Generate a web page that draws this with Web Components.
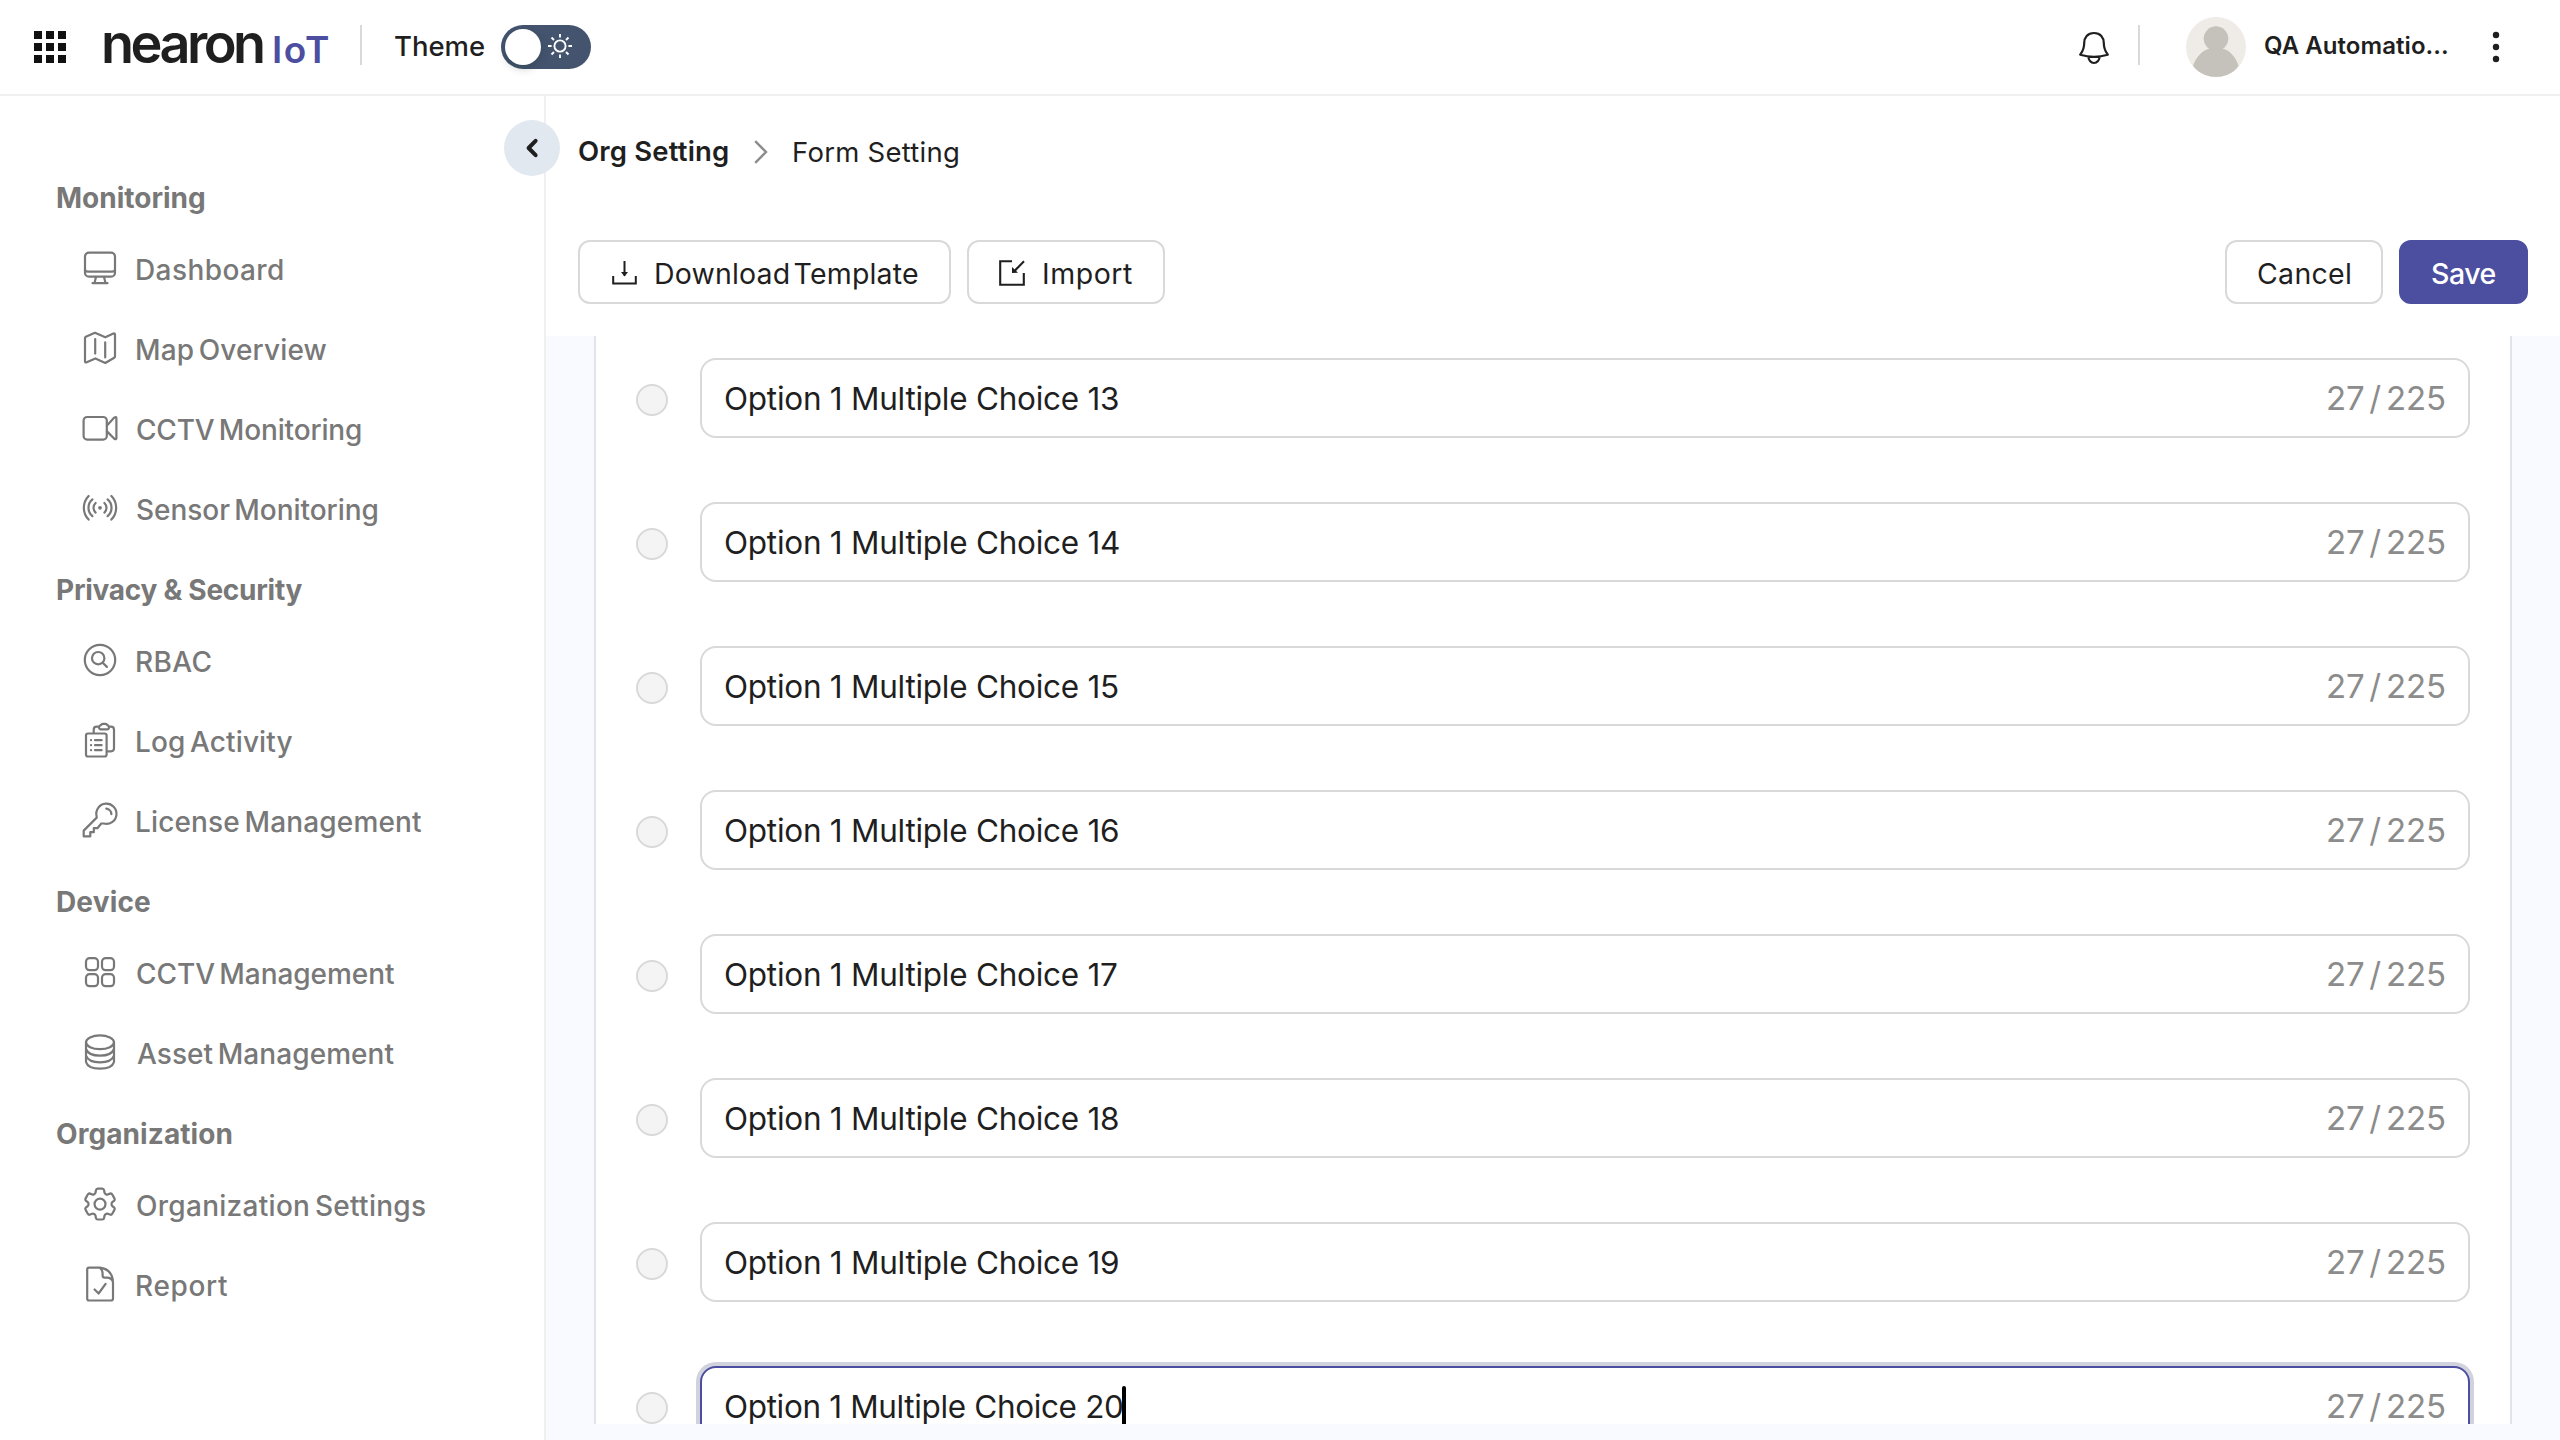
<!DOCTYPE html>
<html lang="en">
<head>
<meta charset="utf-8">
<title>Form Setting</title>
<style>
html,body{margin:0;height:100%}
body{font-family:Inter,"Liberation Sans",sans-serif;color:#1f1f1f;background:#fff;overflow:hidden}
</style>
</head>
<body>
<app-shell></app-shell>
<script>
const define = (name, html, setup) => customElements.define(name, class extends HTMLElement {
  connectedCallback() {
    if (this.shadowRoot) return;
    const root = this.attachShadow({ mode: 'open' });
    const t = document.createElement('template');
    t.innerHTML = html;
    root.appendChild(t.content.cloneNode(true));
    if (setup) setup.call(this, root);
  }
});

/* Label whose tracking is adjusted so its ink spans a given width. */
const ctx = document.createElement('canvas').getContext('2d');
define('fit-text', `<style>:host{display:block;white-space:pre;line-height:1.2;flex:none}</style><slot></slot>`, function () {
  const size = this.getAttribute('size'), weight = this.getAttribute('weight') || 400;
  const text = this.textContent, width = +this.getAttribute('width');
  const ref = this.getAttribute('ref') || text;
  const word = +(this.getAttribute('word') || 0);
  this.style.fontSize = size + 'px';
  this.style.fontWeight = weight;
  this.style.wordSpacing = word + 'px';
  ctx.font = `${weight} ${size}px Inter, "Liberation Sans", sans-serif`;
  const m = ctx.measureText(ref);
  const extra = word * (ref.split(' ').length - 1);
  const s = (width - extra - m.actualBoundingBoxLeft - m.actualBoundingBoxRight) / (ref.length - 1);
  this.style.letterSpacing = s.toFixed(3) + 'px';
  this.style.marginLeft = m.actualBoundingBoxLeft.toFixed(2) + 'px';
  this.style.marginRight = (m.actualBoundingBoxRight - m.width - s).toFixed(2) + 'px';
});

const ICONS = {
  dashboard: '<rect x="5" y="4.7" width="30" height="24" rx="4"/><path d="M5 21.500Q5 23.700 8 23.700H32Q35 23.700 35 21.500M16 29l-1.600 6.200M24 29l1.600 6.200M12.500 35.200h15"/>',
  map: '<path d="M5.800 8.700 15 4.800l10.300 4.500L33.400 5.600Q35 5 35 6.800V28.200q0 1-.8 1.500L25.300 35 15.400 30.400 6.700 34.300Q5 35 5 33.300V10Q5 9.100 5.800 8.700ZM15.200 11v14.600M25.200 14.400V29.500"/>',
  camera: '<rect x="3.600" y="9" width="23.200" height="22.600" rx="3.600"/><path d="M27 17.500 34.300 9.600q2.100-1.500 2.100.6V30q0 2-2.100.7L27 23.400"/>',
  sensor: '<path d="M8.600 8A17 17 0 0 0 8.600 31.600M12.400 11.400A11 11 0 0 0 12.400 28.200M15.600 15A6.600 6.600 0 0 0 15.600 24.600M31.400 8A17 17 0 0 1 31.400 31.600M27.600 11.400A11 11 0 0 1 27.600 28.200M24.400 15A6.600 6.600 0 0 1 24.400 24.600"/><circle cx="20" cy="19.800" r="1.900" fill="currentColor" stroke="none"/>',
  rbac: '<circle cx="20" cy="20" r="15.200"/><circle cx="18.200" cy="18.200" r="6.200"/><path d="m22.700 22.700 4.200 4.200"/>',
  log: '<rect x="6" y="13.500" width="20.600" height="23" rx="2"/><path d="M13.700 13V9.700Q13.700 6.700 16.700 6.700H19M29 6.700H31Q34 6.700 34 9.700V28.300Q34 31.300 31 31.300H27.500M19 6.500L21.300 4.600Q22 3.900 23 3.900H25.300Q26.300 3.900 27 4.600L29 6.500Q29.200 9.400 27 9.400H21Q18.800 9.400 19 6.500ZM15 20.200h6.600M15 25.200h6.600M15 30.200h6.600M11 20.200h.1M11 25.200h.1M11 30.200h.1"/>',
  key: '<path d="M16.600 16.200A10.100 10.100 0 1 1 23.700 23.500H21.300L17.400 28.200H13.800V32.200H10.300V36.300H3.700V30.600L16.700 17.600ZM26.300 8.700A5.800 5.800 0 0 1 31.400 14.200"/>',
  grid: '<rect x="6" y="6.200" width="12" height="12" rx="3.600"/><rect x="22" y="6.200" width="12" height="12" rx="3.600"/><rect x="6" y="22.200" width="12" height="12" rx="3.600"/><rect x="22" y="22.200" width="12" height="12" rx="3.600"/>',
  database: '<ellipse cx="20" cy="10.300" rx="14" ry="6.900"/><path d="M6 10.300V30Q8 36.700 20 36.700T34 30V10.300M6 17Q8.500 23.700 20 23.700T34 17M6 23.600Q8.500 30.300 20 30.300T34 23.600"/>',
  gear: '<g transform="translate(-.5 -.4) scale(1.710)" stroke-width="1.300"><path d="M9.594 3.940c.09-.542.56-.94 1.110-.94h2.593c.55 0 1.020.398 1.110.94l.213 1.281c.063.374.313.686.645.87.074.04.147.083.22.127.325.196.72.257 1.075.124l1.217-.456a1.125 1.125 0 0 1 1.370.49l1.296 2.247a1.125 1.125 0 0 1-.26 1.431l-1.003.827c-.293.241-.438.613-.43.992a7.723 7.723 0 0 1 0 .255c-.008.378.137.75.43.991l1.004.827c.424.35.534.955.26 1.430l-1.298 2.247a1.125 1.125 0 0 1-1.369.491l-1.217-.456c-.355-.133-.75-.072-1.076.124a6.470 6.470 0 0 1-.22.128c-.331.183-.581.495-.644.869l-.213 1.281c-.09.543-.56.94-1.110.94h-2.594c-.55 0-1.019-.398-1.110-.94l-.213-1.281c-.062-.374-.312-.686-.644-.87a6.520 6.520 0 0 1-.22-.127c-.325-.196-.72-.257-1.076-.124l-1.217.456a1.125 1.125 0 0 1-1.369-.49l-1.297-2.247a1.125 1.125 0 0 1 .26-1.431l1.004-.827c.292-.24.437-.613.43-.991a6.932 6.932 0 0 1 0-.255c.007-.38-.138-.751-.43-.992l-1.004-.827a1.125 1.125 0 0 1-.26-1.430l1.297-2.247a1.125 1.125 0 0 1 1.370-.491l1.216.456c.356.133.751.072 1.076-.124.072-.044.146-.086.22-.128.332-.183.582-.495.644-.869l.214-1.280Z"/><circle cx="12" cy="12" r="3.200"/></g>',
  report: '<path d="M9 3.700H20Q33 5.500 33 19V34.500Q33 36.500 31 36.500H9Q7.200 36.500 7.200 34.500V5.700Q7.200 3.700 9 3.700ZM20 3.900Q22.600 6 22.600 9.500V11.500Q22.600 13.600 24.800 13.600H27Q31.500 13.600 33 18M14.600 25.500l4 4L25.600 19.800"/>'
};
define('nav-icon', `<style>:host{display:block;width:40px;height:40px;flex:none}svg{display:block}</style>
<svg width="40" height="40" viewBox="0 0 40 40" fill="none" stroke="currentColor" stroke-width="2.200" stroke-linecap="round" stroke-linejoin="round"></svg>`,
  function (root) { root.querySelector('svg').innerHTML = ICONS[this.getAttribute('name')]; });

define('nav-item', `<style>
:host{display:flex;align-items:center;height:80px;padding-left:80px;gap:17px}
::slotted(nav-icon){margin-top:-4px}
.label{margin-top:1px}
</style><slot name="icon"></slot><div class="label"><slot></slot></div>`);

define('nav-group', `<style>
:host{display:block}
.title{height:72px;display:flex;align-items:flex-start;padding-left:57px}
.title ::slotted(*){line-height:80px!important}
</style><div class="title"><slot name="title"></slot></div><slot></slot>`);

define('collapse-button', `<style>
:host{display:flex;align-items:center;justify-content:center;width:56px;height:56px;border-radius:50%;background:#e1e8f0}
</style><svg width="56" height="56" viewBox="0 0 56 56" fill="none" stroke="#1f1f1f" stroke-width="4" stroke-linecap="round" stroke-linejoin="round"><path d="m31.600 20.800-7 7.200 7 7.200"/></svg>`);

const NAV = [
  ['Monitoring', 147, [['dashboard', 'Dashboard', 146], ['map', 'Map Overview', 189.5], ['camera', 'CCTV Monitoring', 224], ['sensor', 'Sensor Monitoring', 240.5]]],
  ['Privacy & Security', 245.5, [['rbac', 'RBAC', 74.5], ['log', 'Log Activity', 155.5], ['key', 'License Management', 284]]],
  ['Device', 93, [['grid', 'CCTV Management', 257], ['database', 'Asset Management', 256.5]]],
  ['Organization', 174.5, [['gear', 'Organization Settings', 288], ['report', 'Report', 90]]]
];
const esc = s => s.replace('&', '&amp;');
define('side-bar', `<style>
:host{display:block;position:relative;box-sizing:border-box;width:546px;border-right:2px solid #f0f0f0;padding-top:62px;color:#787878;flex:none}
collapse-button{position:absolute;right:-16px;top:24px;z-index:2}
</style><nav>${NAV.map(([t, w, items]) => `<nav-group><fit-text slot="title" size="28" weight="700" width="${w}">${esc(t)}</fit-text>${items.map(([i, n, nw]) => `<nav-item><nav-icon slot="icon" name="${i}"></nav-icon><fit-text size="28" weight="500" word="-3" width="${nw}">${n}</fit-text></nav-item>`).join('')}</nav-group>`).join('')}</nav>
<collapse-button></collapse-button>`);

define('brand-logo', `<style>
:host{display:flex;align-items:baseline;gap:11px;line-height:1}
.iot{color:#4c4fa0}
</style><fit-text size="54" weight="600" width="159">nearon</fit-text><fit-text class="iot" size="37" weight="600" width="54">IoT</fit-text>`);

define('theme-switch', `<style>
:host{display:flex;align-items:center;box-sizing:border-box;width:90px;height:44px;border-radius:22px;background:#44546f;padding:0 4px}
i{width:36px;height:36px;border-radius:50%;background:#fff;box-shadow:0 4px 8px rgba(0,35,11,.2)}
svg{margin-left:7px;margin-top:-1px}
</style><i></i><svg width="24" height="24" viewBox="0 0 24 24" fill="none" stroke="#fff" stroke-width="1.900"><circle cx="12" cy="12" r="5.600"/><path d="M12 0v3.600M12 20.400V24M0 12h3.600M20.400 12H24M3.500 3.500l2.500 2.500M18 18l2.500 2.500M3.500 20.500 6 18M18 6l2.500-2.500"/></svg>`);

define('app-header', `<style>
:host{display:flex;align-items:center;justify-content:space-between;height:94px;border-bottom:2px solid #f0f0f0;flex:none}
.left,.right{display:flex;align-items:center}
.left{padding-left:34px}
.right{padding-right:60px}
svg{display:block;flex:none}
brand-logo{margin:-6px 0 0 38px}
.bar{width:2px;height:40px;background:#d9d9d9;margin-top:-4px}
.left .bar{margin-left:32px}
.theme{padding-left:33px}
theme-switch{margin-left:17px}
.bell{margin-right:28px;margin-top:1px}
.avatar{margin-left:46px}
.name{padding-left:19px;margin-top:-1px}
.more{margin-left:45px}
</style>
<div class="left">
<svg width="32" height="32" viewBox="0 0 32 32" fill="#111"><path d="M0 0h8v8H0zM12 0h8v8h-8zM24 0h8v8h-8zM0 12h8v8H0zM12 12h8v8h-8zM24 12h8v8h-8zM0 24h8v8H0zM12 24h8v8h-8zM24 24h8v8h-8z"/></svg>
<brand-logo></brand-logo><div class="bar"></div>
<div class="theme"><fit-text size="27.500" weight="500" width="89">Theme</fit-text></div><theme-switch></theme-switch>
</div>
<div class="right">
<svg class="bell" width="32" height="34" viewBox="0 0 32 34" fill="none" stroke="#1f1f1f" stroke-width="2.200" stroke-linejoin="round" stroke-linecap="round"><path d="M16 2C9.500 2 6.200 6.500 6.200 12 6.200 18.500 4.500 20.500 2.200 23.700 6.500 25 11 25.800 16 25.800S25.500 25 29.800 23.700C27.500 20.500 25.800 18.500 25.800 12 25.800 6.500 22.500 2 16 2ZM10.400 25.500C10.400 29 12.800 32 16 32S21.600 29 21.600 25.500"/></svg>
<div class="bar"></div>
<svg class="avatar" width="60" height="60" viewBox="0 0 60 60"><clipPath id="c"><circle cx="30" cy="30" r="30"/></clipPath><g clip-path="url(#c)"><path fill="#efece7" d="M0 0h60v60H0z"/><circle cx="30" cy="21.600" r="12.300" fill="#c5c2bb"/><path fill="#c5c2bb" d="M7 49C10 40 16 33.500 23.500 31.500Q30 33 36.500 31.500C44 33.500 50 40 52.500 49L44 60H16Z"/></g></svg>
<div class="name"><fit-text size="24" weight="600" width="182">QA Automatio...</fit-text></div>
<svg class="more" width="8" height="32" viewBox="0 0 8 32" fill="#1f1f1f"><circle cx="4" cy="4" r="3.200"/><circle cx="4" cy="16" r="3.200"/><circle cx="4" cy="28" r="3.200"/></svg>
</div>`);

define('bread-crumb', `<style>
:host{display:flex;align-items:center;height:40px;padding-left:33px}
svg{margin:2px 26px 0}
.last{margin-top:2px}
</style><fit-text size="27.500" weight="600" width="149">Org Setting</fit-text>
<svg width="14" height="24" viewBox="0 0 14 24" fill="none" stroke="#8c8c8c" stroke-width="2.400"><path d="m1.200 1.200 10.800 10.800L1.200 22.800"/></svg>
<div class="last"><fit-text size="27.500" width="164">Form Setting</fit-text></div>`);

define('push-button', `<style>
:host{display:flex;align-items:center;box-sizing:border-box;height:64px;border:2px solid #d9d9d9;border-radius:12px;background:#fff;padding-left:31px}
:host([primary]){background:#4c4fa0;border-color:#4c4fa0;color:#fff}
::slotted(svg){flex:none;margin-top:2px}
div{margin-top:4px}
</style><slot name="icon"></slot><div><slot></slot></div>`,
  function () { this.style.width = this.getAttribute('w') + 'px'; });

define('action-bar', `<style>
:host{display:flex;justify-content:space-between;padding:0 32px}
div{display:flex;gap:16px}
</style>
<div>
<push-button w="373"><svg slot="icon" style="margin-left:1px;margin-right:19px" width="25" height="24" viewBox="0 0 25 24" fill="none" stroke="#1f1f1f" stroke-width="2"><path d="M1.200 15v7.500h22.600V15M12.500 0v14.500"/><path d="m9 11 3.500 4.600L16 11Z" fill="#1f1f1f" stroke="none"/></svg><fit-text size="28.500" word="-5" width="262">Download Template</fit-text></push-button>
<push-button w="198"><svg slot="icon" style="margin-left:-1px;margin-right:19px" width="26" height="26" viewBox="0 0 26 26" fill="none" stroke="#1f1f1f" stroke-width="2.100"><path d="M13 1.200H1.200v23.600h23.600V13M25 1.200 15 11.500"/><path d="M13 13V7l6 5.800Z" fill="#1f1f1f" stroke="none"/></svg><fit-text size="28.500" width="88">Import</fit-text></push-button>
</div>
<div>
<push-button w="158"><fit-text size="28.500" width="92">Cancel</fit-text></push-button>
<push-button w="129" primary><fit-text size="28.500" weight="500" width="63.500">Save</fit-text></push-button>
</div>`);

define('option-row', `<style>
:host{display:flex;align-items:center;height:80px;gap:32px;flex:none}
.radio{box-sizing:border-box;width:32px;height:32px;border:2px solid #d9d9d9;border-radius:50%;background:#f4f4f4;margin-top:4px}
.field{box-sizing:border-box;display:flex;align-items:center;justify-content:space-between;width:1770px;height:80px;border:2px solid #d9d9d9;border-radius:16px;background:#fff;padding:0 23px 0 23px}
.value{display:flex;align-items:center;margin-top:2px}
.count{color:#8c8c8c;margin-top:1px}
:host([focused]) .field{border-color:#4c4fa0;box-shadow:0 0 0 4px #d0d2de}
.caret{display:none;width:4px;height:42px;border-radius:2px;background:#000}
:host([focused]) .caret{display:block}
</style><span class="radio"></span><div class="field"><div class="value"><slot></slot><span class="caret"></span></div><div class="count"><fit-text size="33" word="-4.500" width="117">27 / 225</fit-text></div></div>`);

define('option-list', `<style>
:host{display:block;box-sizing:border-box;background:#f8faff;height:1104px;padding:0 48px 16px}
section{box-sizing:border-box;height:1088px;overflow:hidden;background:#fff;border:solid #e0e4ea;border-width:0 2px;padding:22px 0 0 40px;display:flex;flex-direction:column;gap:64px}
</style><section>${[13, 14, 15, 16, 17, 18, 19, 20].map(n => `<option-row${n === 20 ? ' focused' : ''}><fit-text size="31.500" ref="Option 1 Multiple Choice ${n === 20 ? 20 : 13}" width="${n === 20 ? 397 : 393}">Option 1 Multiple Choice ${n}</fit-text></option-row>`).join('')}</section>`);

define('app-shell', `<style>
:host{display:flex;flex-direction:column;width:2560px;height:1440px;background:#fff}
.body{display:flex;flex:1;min-height:0}
main{flex:1;min-width:0;display:flex;flex-direction:column}
bread-crumb{margin-top:35px}
action-bar{margin-top:69px;margin-bottom:32px}
</style><app-header></app-header><div class="body"><side-bar></side-bar><main><bread-crumb></bread-crumb><action-bar></action-bar><option-list></option-list></main></div>`);
</script>
</body>
</html>
